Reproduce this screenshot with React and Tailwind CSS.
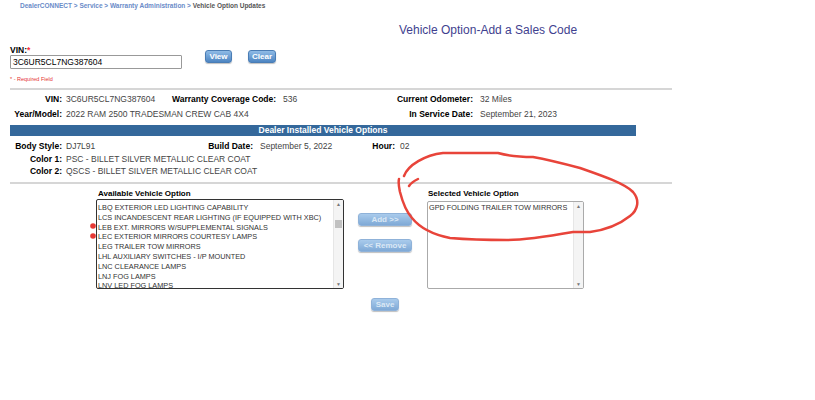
import React from 'react';

const available = [
    'LBQ EXTERIOR LED LIGHTING CAPABILITY',
    'LCS INCANDESCENT REAR LIGHTING (IF EQUIPPED WITH XBC)',
    'LEB EXT. MIRRORS W/SUPPLEMENTAL SIGNALS',
    'LEC EXTERIOR MIRRORS COURTESY LAMPS',
    'LEG TRAILER TOW MIRRORS',
    'LHL AUXILIARY SWITCHES - I/P MOUNTED',
    'LNC CLEARANCE LAMPS',
    'LNJ FOG LAMPS',
    'LNV LED FOG LAMPS',
];

function Btn({ children, disabled, className = '' }) {
    const look = disabled
        ? 'bg-gradient-to-b from-[#a9cbec] to-[#7fa9d6] border-[#8fb2d9] text-[#dbe8f5]'
        : 'bg-gradient-to-b from-[#8fbbe6] to-[#4d85c2] border-[#4a7db5] text-white';
    return (
        <div className={`h-[13px] rounded-[3px] border flex items-center justify-center font-bold text-[8px] leading-none shadow-[0_1px_1px_rgba(0,0,0,0.25)] ${look} ${className}`}>
            {children}
        </div>
    );
}

function Scrollbar({ thumb }) {
    return (
        <div className="w-[10px] h-full bg-[#f4f4f4] flex flex-col items-center justify-between border-l border-[#e6e6e6]">
            <span className="text-[5px] leading-[8px] text-[#777]">▲</span>
            {thumb && <div className="w-[7px] h-[8px] bg-[#c1c1c1] mb-[40px]"></div>}
            <span className="text-[5px] leading-[8px] text-[#777]">▼</span>
        </div>
    );
}

export default function App() {
    return (
        <div className="relative w-[815px] h-[400px] bg-white text-[#444] font-['Liberation_Sans',Arial,sans-serif] overflow-hidden">
            <div className="pl-[20px] pt-[2px] h-[10px] text-[6.5px] font-bold leading-[8px] text-[#6a8bc8]">
                DealerCONNECT &gt; Service &gt; Warranty Administration &gt; <span className="text-[#555]">Vehicle Option Updates</span>
            </div>

            <div className="ml-[10px] w-[662px]">
                <div className="h-[35px] pl-[389px] pt-[13px] text-[12px] leading-[14px] text-[#3f3f8f]">
                    Vehicle Option-Add a Sales Code
                </div>

                <div className="flex h-[25px]">
                    <div className="w-[195px]">
                        <div className="text-[8.5px] font-bold text-black leading-[10px]">VIN:<span className="text-red-500">*</span></div>
                        <div className="w-[172px] h-[14px] border border-[#999] rounded-[1px] px-[2px] text-[8.5px] leading-[12px] text-black">3C6UR5CL7NG387604</div>
                    </div>
                    <Btn className="w-[27px] mt-[5px]">View</Btn>
                    <Btn className="w-[28px] mt-[5px] ml-[16px]">Clear</Btn>
                </div>
                <div className="h-[18px] pt-[6px] text-[5.5px] leading-[6px] text-[#e53333]">* - Required Field</div>

                <div className="h-[2px] bg-[#d6d6d6]"></div>

                <div className="text-[8.5px] leading-[15px] pt-[2px]">
                    <div className="flex h-[15px]">
                        <div className="w-[52px] text-right font-bold text-black">VIN:</div>
                        <div className="w-[110px] pl-[4px]">3C6UR5CL7NG387604</div>
                        <div className="w-[111px] font-bold text-black">Warranty Coverage Code:</div>
                        <div className="w-[100px]">536</div>
                        <div className="w-[90px] text-right font-bold text-black">Current Odometer:</div>
                        <div className="pl-[7px]">32 Miles</div>
                    </div>
                    <div className="flex h-[15px]">
                        <div className="w-[52px] text-right font-bold text-black">Year/Model:</div>
                        <div className="w-[321px] pl-[4px]">2022 RAM 2500 TRADESMAN CREW CAB 4X4</div>
                        <div className="w-[90px] text-right font-bold text-black">In Service Date:</div>
                        <div className="pl-[7px]">September 21, 2023</div>
                    </div>
                </div>

                <div className="mt-[3px] w-[626px] h-[11px] bg-[#34689b] text-white font-bold text-[8.5px] leading-[11px] text-center">
                    Dealer Installed Vehicle Options
                </div>

                <div className="text-[8.5px] leading-[12.5px] pt-[4px] h-[46px]">
                    <div className="flex">
                        <div className="w-[52px] text-right font-bold text-black">Body Style:</div>
                        <div className="w-[138px] pl-[4px]">DJ7L91</div>
                        <div className="w-[53px] text-right font-bold text-black">Build Date:</div>
                        <div className="w-[112px] pl-[7px]">September 5, 2022</div>
                        <div className="w-[30px] text-right font-bold text-black">Hour:</div>
                        <div className="pl-[5px]">02</div>
                    </div>
                    <div className="flex">
                        <div className="w-[52px] text-right font-bold text-black">Color 1:</div>
                        <div className="pl-[4px]">PSC - BILLET SILVER METALLIC CLEAR COAT</div>
                    </div>
                    <div className="flex">
                        <div className="w-[52px] text-right font-bold text-black">Color 2:</div>
                        <div className="pl-[4px]">QSCS - BILLET SILVER METALLIC CLEAR COAT</div>
                    </div>
                </div>

                <div className="h-[2px] bg-[#d6d6d6]"></div>

                <div className="flex pt-[5px]">
                    <div className="ml-[86px] w-[248px]">
                        <div className="pl-[2px] h-[10px] text-[8px] leading-[10px] font-bold text-black">Available Vehicle Option</div>
                        <div className="flex h-[90px] border border-[#333] rounded-[2px] overflow-hidden">
                            <div className="flex-1 pl-[1px] pt-[3px] text-[7.3px] leading-[9.8px] text-[#333] overflow-hidden whitespace-nowrap">
                                {available.map(item => (
                                    <div key={item}>{item}</div>
                                ))}
                            </div>
                            <Scrollbar thumb />
                        </div>
                    </div>

                    <div className="ml-[14px] w-[54px] pt-[24px] flex flex-col gap-[13px]">
                        <Btn disabled>Add &gt;&gt;</Btn>
                        <Btn disabled>&lt;&lt; Remove</Btn>
                    </div>

                    <div className="ml-[15px] w-[157px]">
                        <div className="pl-[1px] h-[12px] text-[8px] leading-[10px] font-bold text-black">Selected Vehicle Option</div>
                        <div className="flex h-[88px] border border-[#aaa] rounded-[2px] overflow-hidden">
                            <div className="flex-1 pl-[1px] pt-[1px] text-[7.3px] leading-[9.8px] text-[#333] whitespace-nowrap overflow-hidden">
                                GPD FOLDING TRAILER TOW MIRRORS
                            </div>
                            <Scrollbar />
                        </div>
                    </div>
                </div>

                <div className="pl-[361px] pt-[9px]">
                    <Btn disabled className="w-[28px]">Save</Btn>
                </div>
            </div>

            <svg className="absolute inset-0 pointer-events-none" width="815" height="400" viewBox="0 0 815 400">
                <path
                    d="M404 176 C408 165 425 155 443 153 L498 153 C505 155 512 157 533 157 C550 160 565 164 580 168 C600 175 624 183 633 192 C640 200 638 210 630 216 C620 224 605 230 590 232 L573 232 C550 236 522 240 507 240 C480 240 462 239 450 238 C435 235 420 228 412 218 C405 210 402 200 400 192 C399 187 398 183 399 179"
                    fill="none" stroke="#e8443a" strokeWidth="2.5" strokeLinecap="round" strokeLinejoin="round"
                />
                <path d="M409 186 C411 183 414 181 418 179" fill="none" stroke="#e8443a" strokeWidth="2.5" strokeLinecap="round" />
                <circle cx="93" cy="226" r="2.8" fill="#e53935" />
                <circle cx="93" cy="236" r="2.8" fill="#e53935" />
            </svg>
        </div>
    );
}
